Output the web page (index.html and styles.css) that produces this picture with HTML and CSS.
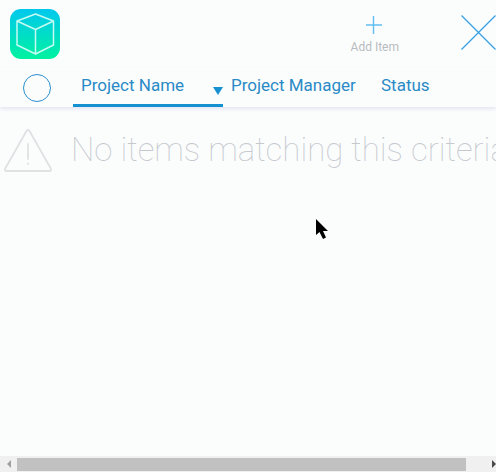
FILE: index.html
```html
<!DOCTYPE html>
<html lang="en">
<head>
  <meta charset="UTF-8">
  <meta name="viewport" content="width=device-width, initial-scale=1.0">
  <title>Projects</title>
  <link rel="stylesheet" href="styles.css">
</head>
<body>
  <header class="toolbar">
    <a href="#" class="logo" aria-label="Projects">
      <svg width="50" height="50" viewBox="0 0 50 50" fill="none">
        <defs>
          <linearGradient id="logoFill" x1="0" y1="0" x2="0" y2="1">
            <stop offset="0" stop-color="#00c8ee"/>
            <stop offset="1" stop-color="#00f2a0"/>
          </linearGradient>
        </defs>
        <rect width="50" height="50" rx="11" fill="url(#logoFill)"/>
        <path d="M25.5 5L43.5 12V36L25.5 45L7 36V12ZM7 12L25.5 20.5L43.5 12M25.5 20.5V45" stroke="#c4fbf3" stroke-width="1.5" stroke-linejoin="round"/>
      </svg>
    </a>
    <div class="actions">
      <button type="button" class="add-btn">
        <svg width="18" height="18" viewBox="0 0 18 18" fill="none" stroke="#62bdf2" stroke-width="1.4">
          <path d="M7.500 0V18M0 9H16"/>
        </svg>
        <span>Add Item</span>
      </button>
      <button type="button" class="close-btn" aria-label="Close">
        <svg width="35" height="35" viewBox="0 0 35 35" fill="none" stroke="#38a0e4" stroke-width="1.3">
          <path d="M0.500 0.500L34.500 34.500M34.500 0.500L0.500 34.500"/>
        </svg>
      </button>
    </div>
  </header>

  <main class="content">
    <table class="items">
      <thead>
        <tr>
          <th class="col-check"><input type="checkbox" class="check-all" aria-label="Select all"></th>
          <th class="col-text sorted" aria-sort="descending">
            <button type="button" class="sort-btn">
              Project Name
              <svg width="10" height="8" viewBox="0 0 10 8" fill="#1590d0"><path d="M0 0H10L5 8Z"/></svg>
            </button>
          </th>
          <th class="col-text"><button type="button" class="sort-btn">Project Manager</button></th>
          <th><button type="button" class="sort-btn">Status</button></th>
        </tr>
      </thead>
    </table>

    <div class="empty">
      <svg width="48" height="43" viewBox="0 0 48 43" fill="none" stroke="#dfe1e3" stroke-width="1.8" stroke-linecap="round" stroke-linejoin="round">
        <path d="M22.500 2Q24 0 25.500 2L46.500 39Q48 42 45.500 42H2.500Q0 42 1.500 39Z"/>
        <path d="M24 15V30M24 34.500V35"/>
      </svg>
      <p>No items matching this criteria</p>
    </div>
  </main>

  <div class="scrollbar">
    <button type="button" class="scroll-btn" aria-label="Scroll left">
      <svg width="4" height="8" viewBox="0 0 4 8" fill="#a0a0a0"><path d="M4 0V8L0 4Z"/></svg>
    </button>
    <div class="scroll-track"><div class="scroll-thumb"></div></div>
    <button type="button" class="scroll-btn scroll-right" aria-label="Scroll right">
      <svg width="4" height="8" viewBox="0 0 4 8" fill="#484848"><path d="M0 0V8L4 4Z"/></svg>
    </button>
  </div>

  <svg class="cursor" width="12" height="21" viewBox="0 0 12 21" fill="#000">
    <path d="M0 0V16L3.500 13L7 20L10 18.500L7 12H12Z"/>
  </svg>
</body>
</html>
```

FILE: styles.css
```css
* {
  box-sizing: border-box;
}

body {
  display: flex;
  flex-direction: column;
  min-height: 100vh;
  margin: 0;
  background: #fbfdfd;
  color: #2a8ac6;
  font-family: Roboto, sans-serif;
  overflow: hidden;
}

button {
  padding: 0;
  border: none;
  background: none;
  color: inherit;
  font: inherit;
  cursor: pointer;
}

svg {
  display: block;
  flex: none;
}

.toolbar {
  display: flex;
  justify-content: space-between;
  padding: 9px 0 8px 10px;
}

.actions {
  display: flex;
  align-items: flex-start;
  gap: 62px;
}

.add-btn {
  display: flex;
  flex-direction: column;
  align-items: center;
  gap: 6px;
  padding-top: 7px;
  color: #b8bbbf;
  font-size: 12px;
  line-height: 14px;
}

.close-btn {
  padding-top: 6px;
}

.content {
  flex: 1;
}

/* column headings */
.items {
  width: 100%;
  table-layout: fixed;
  border-collapse: collapse;
  box-shadow: 0 2px 4px #e4e5f1;
}

.items th {
  height: 38px;
  padding: 0;
  border-bottom: 3px solid transparent;
  font-weight: 400;
  text-align: left;
  vertical-align: top;
}

.items .col-check {
  width: 73px;
}

.items .col-text {
  width: 150px;
}

.items .sorted {
  border-bottom-color: #1590d0;
}

.check-all {
  appearance: none;
  display: block;
  width: 28px;
  height: 28px;
  margin: 7px 0 0 23px;
  border: 1px solid #2a8fcb;
  border-radius: 50%;
}

.sort-btn {
  display: flex;
  justify-content: space-between;
  align-items: flex-end;
  width: 100%;
  padding: 8px 0 0 8px;
  font-size: 17px;
  line-height: 20px;
  white-space: nowrap;
}

/* shown when the filter returns nothing */
.empty {
  display: flex;
  align-items: center;
  gap: 19px;
  padding: 22px 0 0 4px;
  color: #c6c8ce;
  font-size: 33px;
  font-weight: 100;
  line-height: 42px;
  white-space: nowrap;
}

.empty p {
  margin: 0;
}

.scrollbar {
  display: flex;
  height: 16px;
  background: #f0f0f0;
}

.scroll-btn {
  display: flex;
  align-items: center;
  justify-content: center;
  width: 17px;
}

.scroll-right {
  width: 4px;
}

.scroll-track {
  flex: 1;
  padding: 2px 0 1px;
}

.scroll-thumb {
  width: 94.5%;
  height: 100%;
  background: #c1c1c1;
}

.cursor {
  position: absolute;
  left: 316px;
  top: 219px;
}
```
